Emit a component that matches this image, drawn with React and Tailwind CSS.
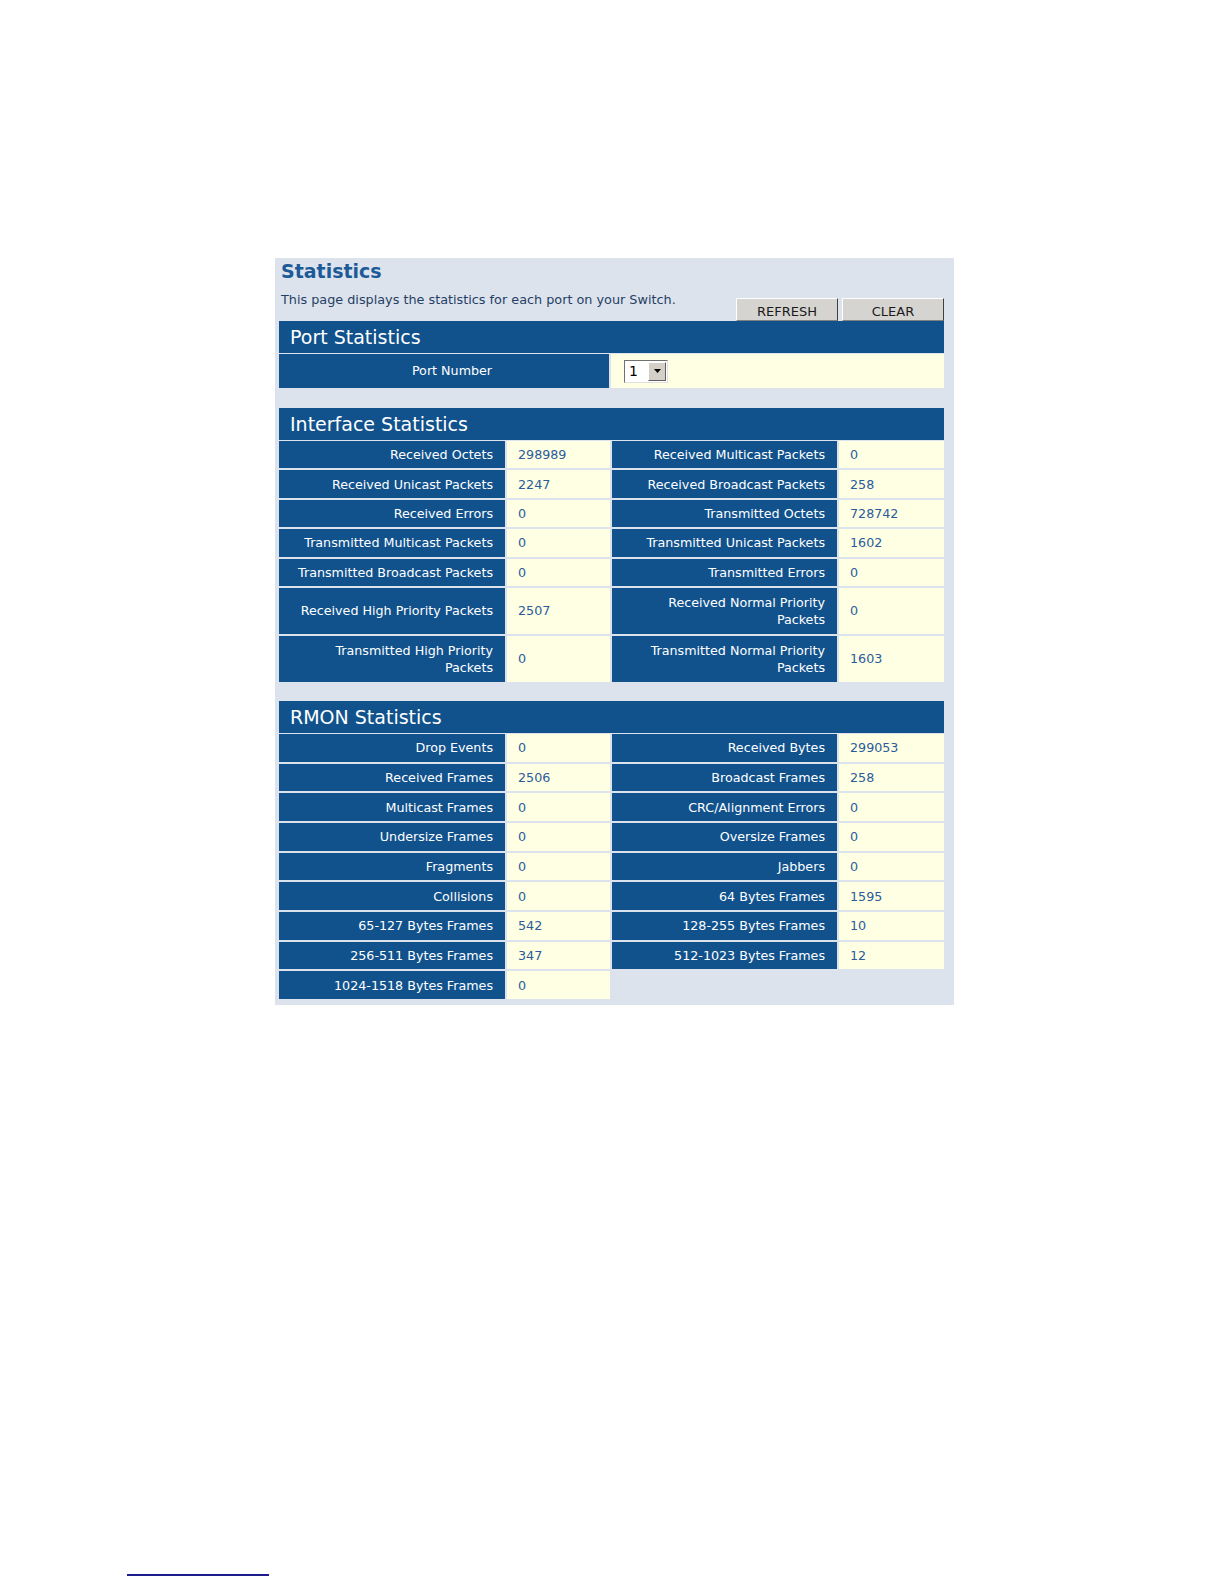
import React from 'react';

// Statistics page of the switch web UI

const interfaceRows = [
  [['Received Octets', '298989'], ['Received Multicast Packets', '0']],
  [['Received Unicast Packets', '2247'], ['Received Broadcast Packets', '258']],
  [['Received Errors', '0'], ['Transmitted Octets', '728742']],
  [['Transmitted Multicast Packets', '0'], ['Transmitted Unicast Packets', '1602']],
  [['Transmitted Broadcast Packets', '0'], ['Transmitted Errors', '0']],
  [['Received High Priority Packets', '2507'], [['Received Normal Priority', 'Packets'], '0']],
  [[['Transmitted High Priority', 'Packets'], '0'], [['Transmitted Normal Priority', 'Packets'], '1603']],
];

const rmonRows = [
  [['Drop Events', '0'], ['Received Bytes', '299053']],
  [['Received Frames', '2506'], ['Broadcast Frames', '258']],
  [['Multicast Frames', '0'], ['CRC/Alignment Errors', '0']],
  [['Undersize Frames', '0'], ['Oversize Frames', '0']],
  [['Fragments', '0'], ['Jabbers', '0']],
  [['Collisions', '0'], ['64 Bytes Frames', '1595']],
  [['65-127 Bytes Frames', '542'], ['128-255 Bytes Frames', '10']],
  [['256-511 Bytes Frames', '347'], ['512-1023 Bytes Frames', '12']],
  [['1024-1518 Bytes Frames', '0'], null],
];

// height of one cell: tall rows hold a two-line label
function cellHeight(tall, rowH) {
  return tall ? 'h-[46px]' : rowH;
}

function Label({ text, tall, rowH }) {
  const lines = Array.isArray(text) ? text : [text];
  return (
    <div
      className={`bg-[#11528d] text-white text-right pr-[12px] flex flex-col justify-center leading-[17px] ${cellHeight(
        tall,
        rowH
      )}`}
    >
      {lines.map((l, i) => (
        <span key={i} className="whitespace-nowrap">{l}</span>
      ))}
    </div>
  );
}

function Value({ text, tall, rowH }) {
  return (
    <div className={`bg-[#ffffe3] text-[#2a5c9c] pl-[11px] flex items-center ${cellHeight(tall, rowH)}`}>
      {text}
    </div>
  );
}

function StatsTable({ rows, rowH }) {
  return (
    <div className="grid grid-cols-[226px_103px_225px_105px] gap-[2px]">
      {rows.map((row, r) => {
        const tall = row.some((c) => c && Array.isArray(c[0]));
        return row.map((cell, c) =>
          cell ? (
            <React.Fragment key={`${r}-${c}`}>
              <Label text={cell[0]} tall={tall} rowH={rowH} />
              <Value text={cell[1]} tall={tall} rowH={rowH} />
            </React.Fragment>
          ) : (
            <React.Fragment key={`${r}-${c}`}>
              <div />
              <div />
            </React.Fragment>
          )
        );
      })}
    </div>
  );
}

function SectionHeader({ title }) {
  return (
    <div className="h-[32px] mb-px bg-[#11528d] text-white text-[19px] pl-[11px] flex items-center">
      {title}
    </div>
  );
}

function Button({ children }) {
  return (
    <button className="w-[102px] h-[23px] bg-[#d6d4d0] border border-t-white border-l-white border-r-[#404040] border-b-[#808080] text-[13px] text-[#1a1a1a] leading-none pt-[4px]">
      {children}
    </button>
  );
}

export default function App() {
  return (
    <div
      className="w-[1224px] h-[1584px] bg-white overflow-hidden pt-[258px]"
      style={{ fontFamily: '"DejaVu Sans", Verdana, sans-serif' }}
    >
      <div className="ml-[275px] w-[679px] bg-[#dde3ec] pl-[4px] pr-[10px] pb-[6px] text-[12.7px]">
        {/* title + description + buttons */}
        <div className="pt-px text-[#1c5a98] font-bold text-[19px] leading-[24px] pl-[2px]">Statistics</div>
        <div className="flex items-end justify-between">
          <div className="text-[#243f66] text-[12.8px] leading-[16px] pl-[2px] pb-[13px] pt-[9px]">
            This page displays the statistics for each port on your Switch.
          </div>
          <div className="flex gap-[4px]">
            <Button>REFRESH</Button>
            <Button>CLEAR</Button>
          </div>
        </div>

        {/* Port statistics */}
        <SectionHeader title="Port Statistics" />
        <div className="grid grid-cols-[330px_333px] gap-[2px]">
          <div className="h-[34px] bg-[#11528d] text-white flex items-center justify-center pl-[16px]">Port Number</div>
          <div className="h-[34px] bg-[#ffffe3] flex items-center pl-[13px]">
            <div className="flex w-[44px] h-[23px] border border-t-[#707070] border-l-[#707070] border-r-[#e0e0e0] border-b-[#e0e0e0] bg-white">
              <span className="flex-1 pl-[4px] text-[14px] leading-[21px] text-black">1</span>
              <span className="w-[18px] m-px bg-[#d4d0c8] border border-t-white border-l-white border-r-[#606060] border-b-[#606060] flex items-center justify-center">
                <svg width="7" height="4" viewBox="0 0 7 4">
                  <path d="M0 0h7L3.5 4z" fill="#000" />
                </svg>
              </span>
            </div>
          </div>
        </div>

        <div className="h-[20px]" />
        <SectionHeader title="Interface Statistics" />
        <StatsTable rows={interfaceRows} rowH="h-[27.4px]" />

        <div className="h-[19px]" />
        <SectionHeader title="RMON Statistics" />
        <StatsTable rows={rmonRows} rowH="h-[27.7px]" />
      </div>

      <div className="ml-[127px] mt-[569px] w-[142px] h-[2px] bg-[#1c1c8c]" />
    </div>
  );
}
